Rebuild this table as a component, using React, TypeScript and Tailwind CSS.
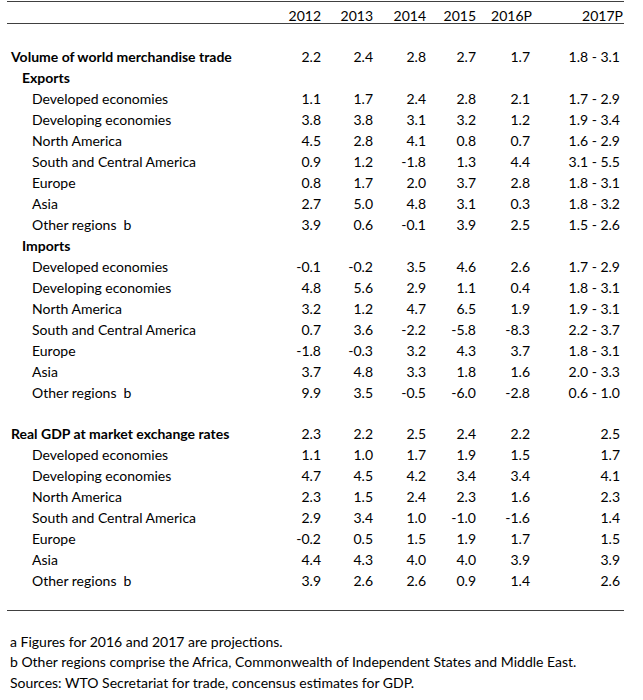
import React from "react";

type Row = { label: string; level: 0 | 1 | 2; values?: string[] };

const trade: Row[] = [
  { label: "Volume of world merchandise trade", level: 0, values: ["2.2", "2.4", "2.8", "2.7", "1.7", "1.8 - 3.1"] },
  { label: "Exports", level: 1 },
  { label: "Developed economies", level: 2, values: ["1.1", "1.7", "2.4", "2.8", "2.1", "1.7 - 2.9"] },
  { label: "Developing economies", level: 2, values: ["3.8", "3.8", "3.1", "3.2", "1.2", "1.9 - 3.4"] },
  { label: "North America", level: 2, values: ["4.5", "2.8", "4.1", "0.8", "0.7", "1.6 - 2.9"] },
  { label: "South and Central America", level: 2, values: ["0.9", "1.2", "-1.8", "1.3", "4.4", "3.1 - 5.5"] },
  { label: "Europe", level: 2, values: ["0.8", "1.7", "2.0", "3.7", "2.8", "1.8 - 3.1"] },
  { label: "Asia", level: 2, values: ["2.7", "5.0", "4.8", "3.1", "0.3", "1.8 - 3.2"] },
  { label: "Other regions  b", level: 2, values: ["3.9", "0.6", "-0.1", "3.9", "2.5", "1.5 - 2.6"] },
  { label: "Imports", level: 1 },
  { label: "Developed economies", level: 2, values: ["-0.1", "-0.2", "3.5", "4.6", "2.6", "1.7 - 2.9"] },
  { label: "Developing economies", level: 2, values: ["4.8", "5.6", "2.9", "1.1", "0.4", "1.8 - 3.1"] },
  { label: "North America", level: 2, values: ["3.2", "1.2", "4.7", "6.5", "1.9", "1.9 - 3.1"] },
  { label: "South and Central America", level: 2, values: ["0.7", "3.6", "-2.2", "-5.8", "-8.3", "2.2 - 3.7"] },
  { label: "Europe", level: 2, values: ["-1.8", "-0.3", "3.2", "4.3", "3.7", "1.8 - 3.1"] },
  { label: "Asia", level: 2, values: ["3.7", "4.8", "3.3", "1.8", "1.6", "2.0 - 3.3"] },
  { label: "Other regions  b", level: 2, values: ["9.9", "3.5", "-0.5", "-6.0", "-2.8", "0.6 - 1.0"] },
];

const gdp: Row[] = [
  { label: "Real GDP at market exchange rates", level: 0, values: ["2.3", "2.2", "2.5", "2.4", "2.2", "2.5"] },
  { label: "Developed economies", level: 2, values: ["1.1", "1.0", "1.7", "1.9", "1.5", "1.7"] },
  { label: "Developing economies", level: 2, values: ["4.7", "4.5", "4.2", "3.4", "3.4", "4.1"] },
  { label: "North America", level: 2, values: ["2.3", "1.5", "2.4", "2.3", "1.6", "2.3"] },
  { label: "South and Central America", level: 2, values: ["2.9", "3.4", "1.0", "-1.0", "-1.6", "1.4"] },
  { label: "Europe", level: 2, values: ["-0.2", "0.5", "1.5", "1.9", "1.7", "1.5"] },
  { label: "Asia", level: 2, values: ["4.4", "4.3", "4.0", "4.0", "3.9", "3.9"] },
  { label: "Other regions  b", level: 2, values: ["3.9", "2.6", "2.6", "0.9", "1.4", "2.6"] },
];

function DataRow({ row }: { row: Row }) {
  const labelCls =
    row.level === 0
      ? "pl-[4px] font-bold"
      : row.level === 1
      ? "pl-[15px] font-bold"
      : "pl-[25px]";
  return (
    <div className="grid h-[21px] grid-cols-[274px_40px_52px_53px_50px_54px_94px] items-center">
      <div className={`whitespace-pre ${labelCls}`}>{row.label}</div>
      {(row.values ?? ["", "", "", "", "", ""]).map((v, i) => (
        <div key={i} className={`text-right whitespace-pre ${i === 5 ? "pr-[4px]" : ""}`}>
          {v}
        </div>
      ))}
    </div>
  );
}

export default function App() {
  return (
    <div
      className="h-[700px] w-[643px] bg-white pl-[7px] pr-[19px] pt-[1px] text-[14px] leading-[21px] text-black"
      style={{ fontFamily: "Lato, 'Open Sans', sans-serif" }}
    >
      <div className="border-y border-[#404040]">
        <div className="grid h-[21px] grid-cols-[274px_40px_52px_53px_50px_56px_92px] items-center pt-[3px]">
          <div />
          <div className="text-right">2012</div>
          <div className="text-right">2013</div>
          <div className="text-right">2014</div>
          <div className="text-right">2015</div>
          <div className="text-right">2016P</div>
          <div className="pr-[1px] text-right">2017P</div>
        </div>
      </div>
      <div className="h-[22px]" />
      {trade.map((r, i) => (
        <DataRow key={i} row={r} />
      ))}
      <div className="h-[20px]" />
      {gdp.map((r, i) => (
        <DataRow key={i} row={r} />
      ))}
      <div className="h-[20px] border-b border-[#404040]" />
      <div className="h-[20px]" />
      <div className="flex flex-col pl-[3px]">
        <div className="flex h-[20.5px] items-center">a Figures for 2016 and 2017 are projections.</div>
        <div className="flex h-[20.5px] items-center">
          b Other regions comprise the Africa, Commonwealth of Independent States and Middle East.
        </div>
        <div className="flex h-[20.5px] items-center">
          Sources: WTO Secretariat for trade, concensus estimates for GDP.
        </div>
      </div>
    </div>
  );
}
